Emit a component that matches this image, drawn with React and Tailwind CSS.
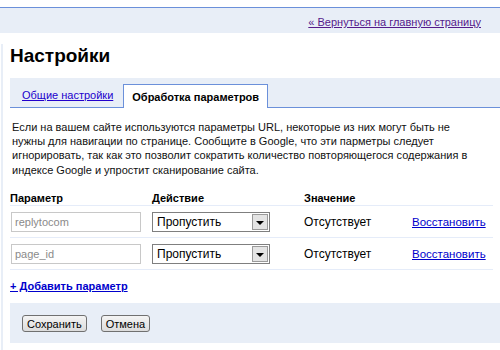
import React from "react";

const rows = [
  { name: "replytocom", action: "Пропустить", value: "Отсутствует" },
  { name: "page_id", action: "Пропустить", value: "Отсутствует" },
];

const FakeSelect = ({ value }) => (
  <div className="flex h-[20px] w-[118px] items-center border border-[#7f7f7f] bg-white pl-[4px] pr-[1px]">
    <span className="flex-1 text-[12px] leading-[14px] text-black">{value}</span>
    <div className="flex h-[16px] w-[16px] items-center justify-center border border-[#9a9a9a] bg-[#e4e4e4]">
      <div className="mt-[2px] h-0 w-0 border-x-[4px] border-t-[4px] border-x-transparent border-t-black" />
    </div>
  </div>
);

const Btn = ({ children }) => (
  <button className="h-[17px] rounded-[3px] border border-[#707070] bg-gradient-to-b from-[#f4f4f4] to-[#dcdcdc] px-[4px] text-[11px] leading-[12px] text-black">
    {children}
  </button>
);

const App = () => {
  return (
    <div className="h-[350px] w-[500px] overflow-hidden bg-white pt-[7px] font-['Liberation_Sans',Arial,sans-serif] text-black">
      <div className="flex h-[26px] items-center justify-end border-t border-[#6b90da] bg-[#e8eef7] pr-[19px] pt-[3px]">
        <a className="text-[11px] leading-[14px] text-[#551a8b] underline">
          « Вернуться на главную страницу
        </a>
      </div>

      <div className="ml-[1px] mt-[11px] h-[400px] border-l-2 border-[#e8eef7] pl-[7px]">
        <h1 className="text-[19px] font-bold leading-[24px]">Настройки</h1>

        <div className="mt-[10px] flex h-[30px] items-end border-b border-[#6b90da] bg-[#e8eef7]">
          <div className="flex h-[24px] items-center pl-[12px] pr-[10px]">
            <a className="text-[11px] leading-[14px] text-[#2200cc] underline">Общие настройки</a>
          </div>
          <div className="-mb-px flex h-[24px] items-center border border-b-0 border-[#6b90da] bg-white px-[8px]">
            <span className="text-[11px] font-bold leading-[14px]">Обработка параметров</span>
          </div>
        </div>

        <p className="mt-[12px] whitespace-nowrap px-[2px] text-[11px] leading-[14.2px] text-[#111]">
          Если на вашем сайте используются параметры URL, некоторые из них могут быть не
          <br />
          нужны для навигации по странице. Сообщите в Google, что эти парметры следует
          <br />
          игнорировать, так как это позволит сократить количество повторяющегося содержания в
          <br />
          индексе Google и упростит сканирование сайта.
        </p>

        <div className="mr-[7px] mt-[14px]">
          <div className="flex h-[15px] items-start border-b border-[#e5ecf9] text-[11px] font-bold leading-[14px]">
            <div className="w-[142px]">Параметр</div>
            <div className="w-[152px]">Действие</div>
            <div>Значение</div>
          </div>
          {rows.map((row) => (
            <div
              key={row.name}
              className="flex h-[32px] items-center border-b border-[#e5ecf9] pt-[2px] text-[12px] leading-[14px]"
            >
              <div className="w-[142px]">
                <div className="ml-[1px] flex h-[20px] w-[130px] items-center border border-[#c8c8c8] px-[3px] text-[11px] text-[#8a8a8a]">
                  {row.name}
                </div>
              </div>
              <div className="w-[152px]">
                <FakeSelect value={row.action} />
              </div>
              <div className="w-[108px]">{row.value}</div>
              <a className="text-[11.5px] text-[#0000cc] underline">Восстановить</a>
            </div>
          ))}
        </div>

        <a className="mt-[9px] block text-[11px] font-bold leading-[14px] text-[#0000cc] underline">
          + Добавить параметр
        </a>

        <div className="mt-[10px] flex h-[40px] items-center gap-[14px] bg-[#e8eef7] pl-[12px] pt-[2px]">
          <Btn>Сохранить</Btn>
          <Btn>Отмена</Btn>
        </div>
      </div>
    </div>
  );
};

export default App;
